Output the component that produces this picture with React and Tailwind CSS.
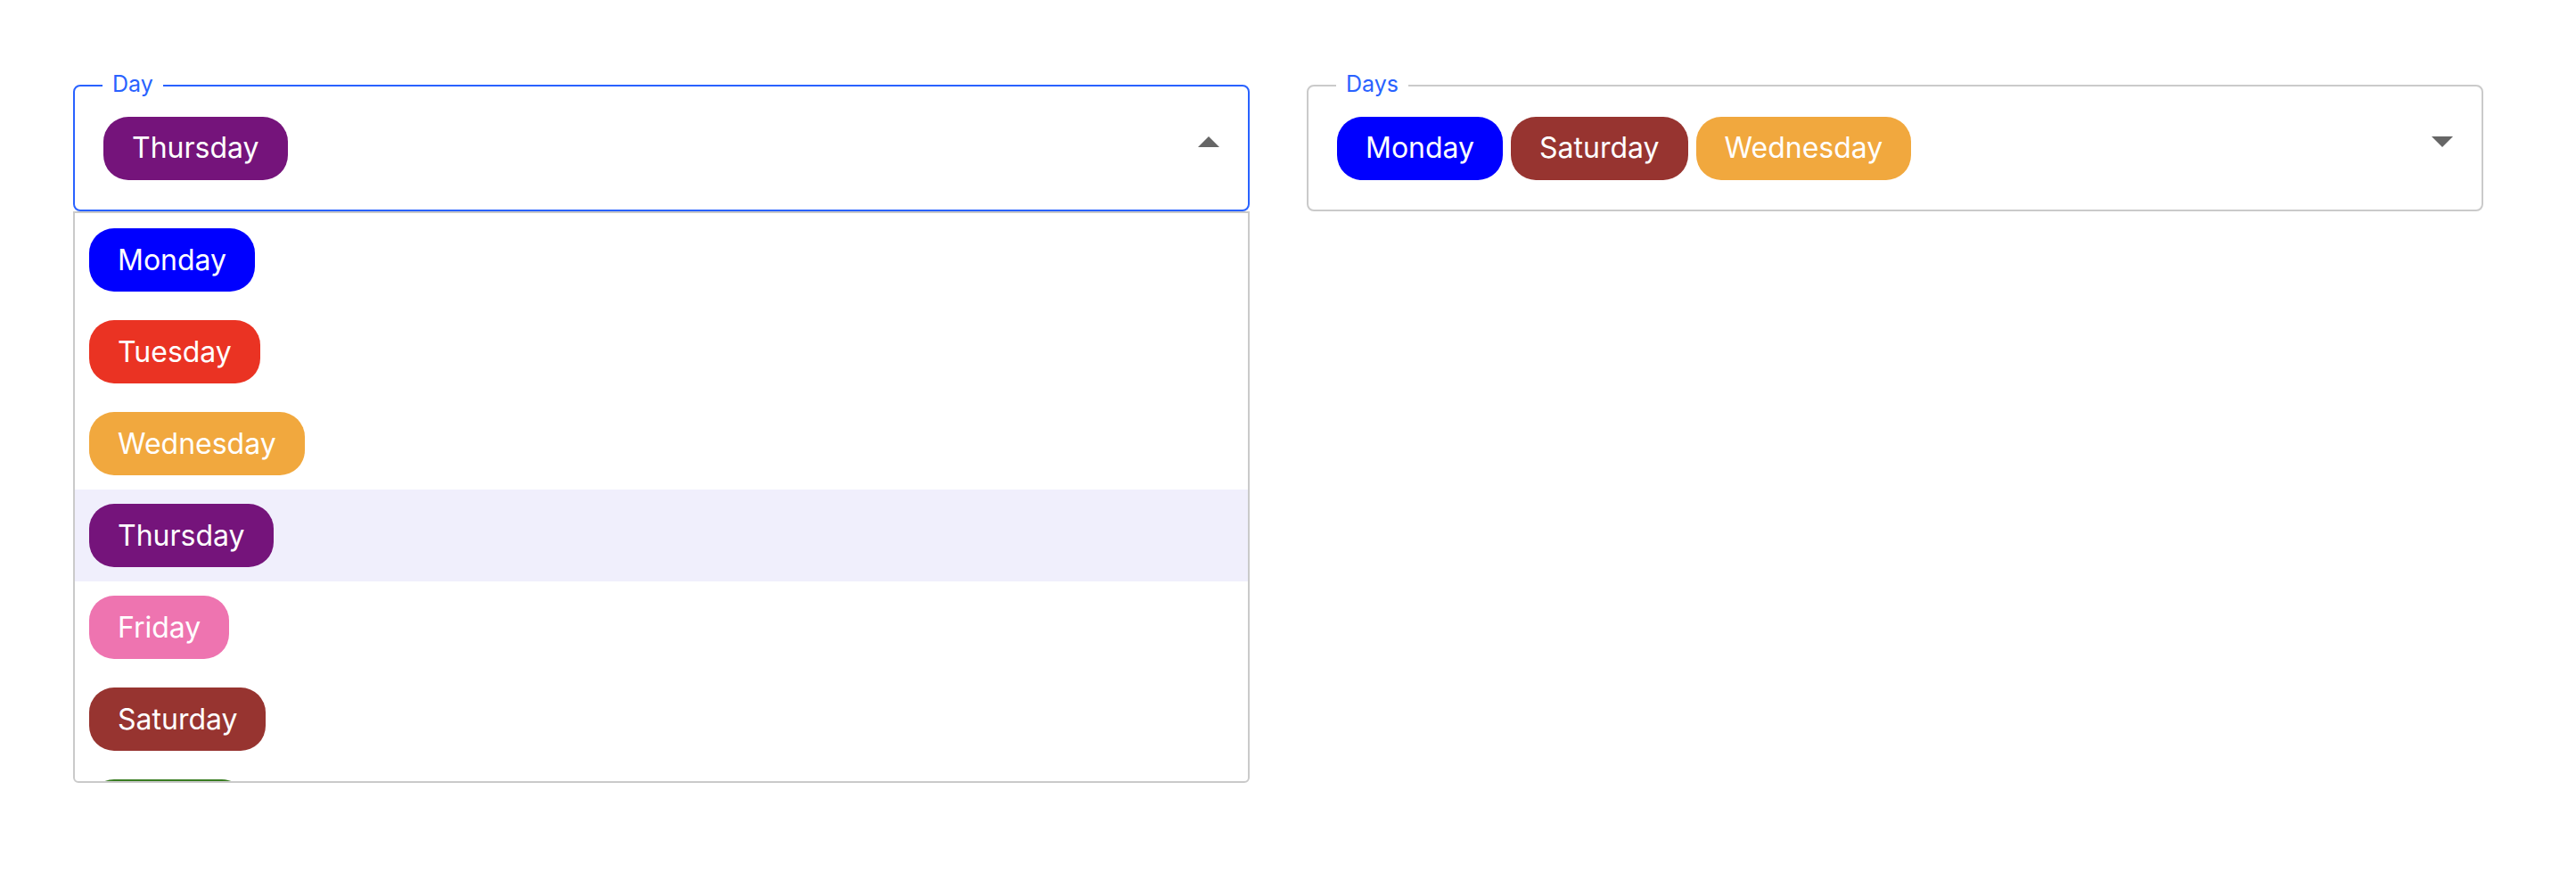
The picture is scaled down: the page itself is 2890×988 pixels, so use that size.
const DAYS = [
  { name: 'Monday', color: 'bg-[#0000ff]' },
  { name: 'Tuesday', color: 'bg-[#ea3323]' },
  { name: 'Wednesday', color: 'bg-[#f1a83e]' },
  { name: 'Thursday', color: 'bg-[#75147b]' },
  { name: 'Friday', color: 'bg-[#ee74b0]' },
  { name: 'Saturday', color: 'bg-[#973430]' },
  { name: 'Sunday', color: 'bg-[#3a7d22]' },
]

const colorOf = (name) => DAYS.find((d) => d.name === name).color

function Chip({ name }) {
  return (
    <span
      className={`flex h-[71px] shrink-0 items-center rounded-[28px] px-[32px] text-[32px] leading-none text-white ${colorOf(name)}`}
    >
      {name}
    </span>
  )
}

function Arrow({ up }) {
  return (
    <svg width="24" height="12" viewBox="0 0 24 12" className="mr-[32px] mb-[14px] shrink-0">
      {up ? <path d="M0 12 L12 0 L24 12 Z" fill="#666666" /> : <path d="M0 0 L12 12 L24 0 Z" fill="#666666" />}
    </svg>
  )
}

function Select({ label, values, open, focused }) {
  return (
    <div className="w-[1320px] shrink-0">
      <div
        className={`relative flex h-[142px] items-center gap-[9px] rounded-[8px] border-2 pl-[32px] ${
          focused ? 'border-[#2962ff]' : 'border-[#cacaca]'
        }`}
      >
        <span className="absolute -top-[18px] left-[31px] bg-white px-[11px] text-[25px] leading-[30px] text-[#2962ff]">
          {label}
        </span>
        {values.map((v) => (
          <Chip key={v} name={v} />
        ))}
        <div className="flex-1" />
        <Arrow up={open} />
      </div>
      {open && (
        <div className="h-[641px] overflow-hidden rounded-b-[6px] border-2 border-[#cacaca] pt-px">
          {DAYS.map((d) => (
            <div
              key={d.name}
              className={`flex h-[103px] items-center pl-[16px] ${values.includes(d.name) ? 'bg-[#f0effc]' : ''}`}
            >
              <Chip name={d.name} />
            </div>
          ))}
        </div>
      )}
    </div>
  )
}

export default function App() {
  return (
    <div className="min-h-[988px] bg-white font-['Inter',sans-serif]">
      <div className="flex gap-[64px] pl-[82px] pt-[95px]">
        <Select label="Day" values={['Thursday']} open focused />
        <Select label="Days" values={['Monday', 'Saturday', 'Wednesday']} />
      </div>
    </div>
  )
}
